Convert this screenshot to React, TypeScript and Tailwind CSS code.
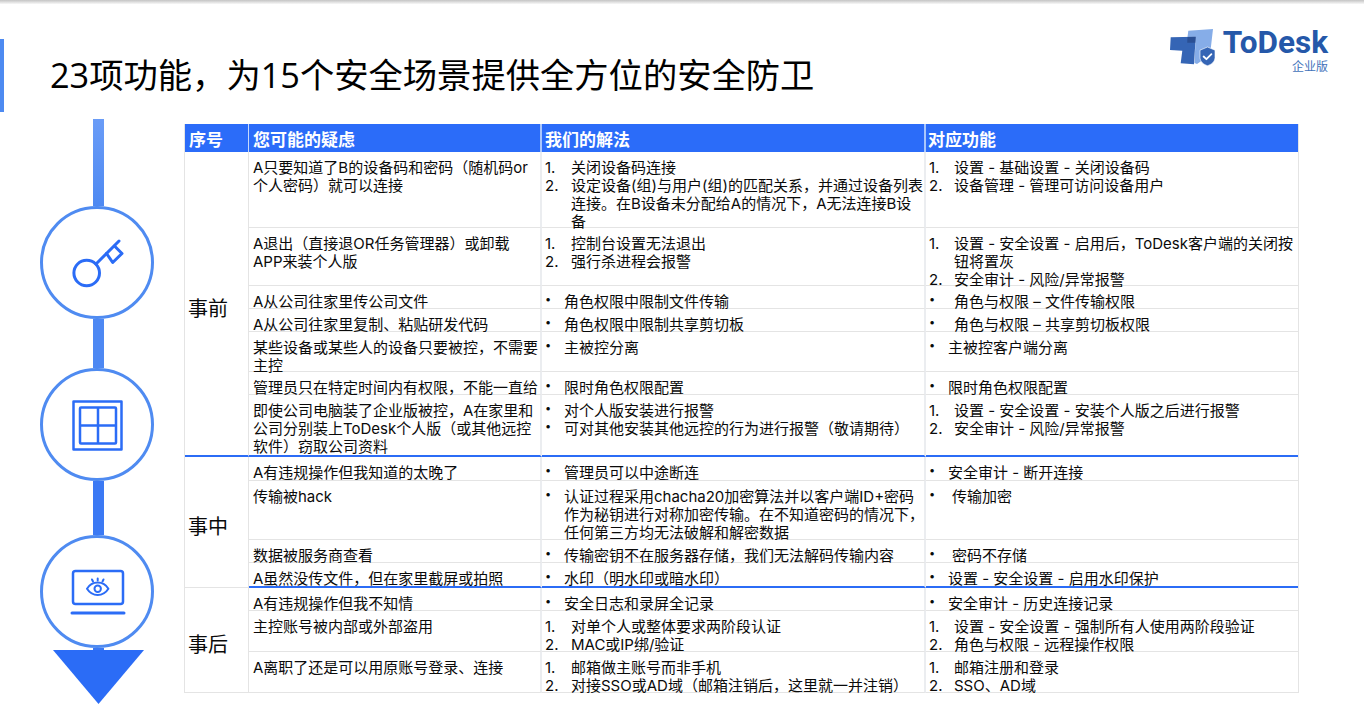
import React from "react";

type L = { ind: string; num?: boolean; items: string[] };
type Row = { q: string; a: L; f: L };

const A_N = "w-[26px]";
const A_B = "w-[19px]";
const F_N = "w-[25px]";
const F_B = "w-[19px]";
const F_B2 = "w-[23px]";
const F_B3 = "w-[25px]";

const groups: { name: string; span: string; border: string; rows: Row[] }[] = [
  {
    name: "事前",
    span: "row-span-7",
    border: "border-b-2 border-b-[#2b6cf6]",
    rows: [
      {
        q: "A只要知道了B的设备码和密码（随机码or\n个人密码）就可以连接",
        a: { ind: A_N, num: true, items: ["关闭设备码连接", "设定设备(组)与用户(组)的匹配关系，并通过设备列表\n连接。在B设备未分配给A的情况下，A无法连接B设\n备"] },
        f: { ind: F_N, num: true, items: ["设置 - 基础设置 - 关闭设备码", "设备管理 - 管理可访问设备用户"] },
      },
      {
        q: "A退出（直接退OR任务管理器）或卸载\nAPP来装个人版",
        a: { ind: A_N, num: true, items: ["控制台设置无法退出", "强行杀进程会报警"] },
        f: { ind: F_N, num: true, items: ["设置 - 安全设置 - 启用后，ToDesk客户端的关闭按\n钮将置灰", "安全审计 - 风险/异常报警"] },
      },
      {
        q: "A从公司往家里传公司文件",
        a: { ind: A_B, items: ["角色权限中限制文件传输"] },
        f: { ind: F_B3, items: ["角色与权限 – 文件传输权限"] },
      },
      {
        q: "A从公司往家里复制、粘贴研发代码",
        a: { ind: A_B, items: ["角色权限中限制共享剪切板"] },
        f: { ind: F_B3, items: ["角色与权限 – 共享剪切板权限"] },
      },
      {
        q: "某些设备或某些人的设备只要被控，不需要\n主控",
        a: { ind: A_B, items: ["主被控分离"] },
        f: { ind: F_B, items: ["主被控客户端分离"] },
      },
      {
        q: "管理员只在特定时间内有权限，不能一直给",
        a: { ind: A_B, items: ["限时角色权限配置"] },
        f: { ind: F_B, items: ["限时角色权限配置"] },
      },
      {
        q: "即使公司电脑装了企业版被控，A在家里和\n公司分别装上ToDesk个人版（或其他远控\n软件）窃取公司资料",
        a: { ind: A_B, items: ["对个人版安装进行报警", "可对其他安装其他远控的行为进行报警（敬请期待）"] },
        f: { ind: F_N, num: true, items: ["设置 - 安全设置 - 安装个人版之后进行报警", "安全审计 - 风险/异常报警"] },
      },
    ],
  },
  {
    name: "事中",
    span: "row-span-4",
    border: "border-b border-b-[#e4e4e4]",
    rows: [
      {
        q: "A有违规操作但我知道的太晚了",
        a: { ind: A_B, items: ["管理员可以中途断连"] },
        f: { ind: F_B, items: ["安全审计 - 断开连接"] },
      },
      {
        q: "传输被hack",
        a: { ind: A_B, items: ["认证过程采用chacha20加密算法并以客户端ID+密码\n作为秘钥进行对称加密传输。在不知道密码的情况下，\n任何第三方均无法破解和解密数据"] },
        f: { ind: F_B2, items: ["传输加密"] },
      },
      {
        q: "数据被服务商查看",
        a: { ind: A_B, items: ["传输密钥不在服务器存储，我们无法解码传输内容"] },
        f: { ind: F_B2, items: ["密码不存储"] },
      },
      {
        q: "A虽然没传文件，但在家里截屏或拍照",
        a: { ind: A_B, items: ["水印（明水印或暗水印）"] },
        f: { ind: F_B, items: ["设置 - 安全设置 - 启用水印保护"] },
      },
    ],
  },
  {
    name: "事后",
    span: "row-span-3",
    border: "border-b border-b-[#e4e4e4]",
    rows: [
      {
        q: "A有违规操作但我不知情",
        a: { ind: A_B, items: ["安全日志和录屏全记录"] },
        f: { ind: F_B, items: ["安全审计 - 历史连接记录"] },
      },
      {
        q: "主控账号被内部或外部盗用",
        a: { ind: A_N, num: true, items: ["对单个人或整体要求两阶段认证", "MAC或IP绑/验证"] },
        f: { ind: F_N, num: true, items: ["设置 - 安全设置 - 强制所有人使用两阶段验证", "角色与权限 - 远程操作权限"] },
      },
      {
        q: "A离职了还是可以用原账号登录、连接",
        a: { ind: A_N, num: true, items: ["邮箱做主账号而非手机", "对接SSO或AD域（邮箱注销后，这里就一并注销）"] },
        f: { ind: F_N, num: true, items: ["邮箱注册和登录", "SSO、AD域"] },
      },
    ],
  },
];

function List({ l }: { l: L }) {
  return (
    <div>
      {l.items.map((t, i) => (
        <div key={i} className="flex">
          {l.num ? (
            <span className={`${l.ind} shrink-0`}>{`${i + 1}.`}</span>
          ) : (
            <span className={`${l.ind} -mt-[3px] shrink-0 text-[11px]`}>•</span>
          )}
          <span className="whitespace-pre">{t}</span>
        </div>
      ))}
    </div>
  );
}

const BLUE = "#2b6cf6";

function Circle({ children }: { children: React.ReactNode }) {
  return (
    <div className="flex h-[113px] w-[114px] shrink-0 items-center justify-center rounded-full border-[3.5px] border-[#4f8bf1] bg-white">
      {children}
    </div>
  );
}

const headers = [
  { t: "序号", c: "pl-[4px] border-r border-r-[#c6d9fc]" },
  { t: "您可能的疑虑", c: "pl-[4px] border-r-2 border-r-[#a9c6fb]" },
  { t: "我们的解法", c: "pl-[3px] border-r-2 border-r-[#a9c6fb]" },
  { t: "对应功能", c: "pl-[2px]" },
];

export default function App() {
  return (
    <div
      lang="zh-CN"
      className="h-[708px] w-[1364px] overflow-hidden bg-white text-[#0a0a0a]"
      style={{ fontFamily: 'Inter,"Noto Sans CJK SC",sans-serif' }}
    >
      <div className="h-[4px] bg-gradient-to-b from-[#c4c4c4] to-[#f8f8f8]" />
      <header className="flex h-[115px] items-start">
        <div className="mt-[35px] h-[73px] w-[4px] shrink-0 bg-[#4d8af1]" />
        <h1
          className="ml-[46px] mt-[48px] whitespace-nowrap text-[34.3px] font-normal leading-[46px] text-black"
          style={{ fontFamily: '"Open Sans","Noto Sans CJK SC",sans-serif' }}
        >
          23项功能，为15个安全场景提供全方位的安全防卫
        </h1>
        <div className="ml-auto mr-[36px] mt-[24px] flex">
          <svg width="50" height="40" viewBox="1168 28 50 40" className="shrink-0">
            <polygon points="1188.3,30.7 1213,29 1210,55 1197,64 1194.5,63 1195.7,36.7 1187.5,36.9" fill="#86ade8" />
            <polygon points="1170.7,37.3 1195.7,36.7 1194,64.3 1180.7,63.3 1182.3,50.7 1170,50" fill="#3565b5" />
            <polygon points="1187.5,36.9 1195.7,36.7 1195.3,42.7 1187.2,42.7" fill="#2a4f94" />
            <path d="M1207.5 47 L1215 50.2 V57.5 C1215 61.5 1211.5 64.5 1207.5 65.7 C1203.5 64.5 1200 61.5 1200 57.5 V50.2 Z" fill="#3565b5" stroke="#fff" strokeWidth="0.6" />
            <path d="M1203.6 56.5 L1206.4 59.2 L1211.4 54.2" fill="none" stroke="#fff" strokeWidth="1.8" strokeLinecap="round" strokeLinejoin="round" />
          </svg>
          <div className="ml-[5px] flex flex-col items-end">
            <div
              className="text-[31.5px] font-bold leading-[30px] text-[#2558a9]"
              style={{ fontFamily: "Roboto,sans-serif" }}
            >
              ToDesk
            </div>
            <div className="mt-[2px] text-[12px] leading-[14px] text-[#4272ba]">企业版</div>
          </div>
        </div>
      </header>

      <main className="flex items-start">
        <div className="ml-[40px] flex w-[114px] shrink-0 flex-col items-center">
          <div className="ml-[3px] h-[87px] w-[11px] bg-gradient-to-b from-[#6a9cf7] to-[#4e89f2]" />
          <Circle>
            <svg width="60" height="60" viewBox="0 0 60 60" fill="none" stroke={BLUE} strokeWidth="3" strokeLinecap="round" strokeLinejoin="round">
              <circle cx="19.7" cy="40" r="12.8" />
              <path d="M29 31 L52 8" />
              <path d="M39.5 20.5 L45.7 29.5 L55 20.5 L47.5 13" />
            </svg>
          </Circle>
          <div className="ml-[3px] h-[49px] w-[11px] bg-[#4d88f3]" />
          <Circle>
            <svg width="60" height="60" viewBox="0 0 60 60" fill="none" stroke={BLUE} strokeWidth="2.5" strokeLinejoin="round">
              <rect x="6.5" y="6.5" width="48" height="48" />
              <rect x="13" y="12.5" width="36" height="36" rx="1" />
              <path d="M31 12.5 V48.5 M13 30.5 H49" />
            </svg>
          </Circle>
          <div className="ml-[3px] h-[54px] w-[11px] bg-[#3b79f4]" />
          <Circle>
            <svg width="60" height="60" viewBox="0 0 60 60" fill="none" stroke={BLUE} strokeWidth="2.5" strokeLinecap="round" strokeLinejoin="round">
              <rect x="6" y="9" width="50" height="33" rx="2.5" />
              <path d="M5 51 H57" strokeWidth="3" />
              <path d="M20 26.8 C23 21.5 27 20.5 30.7 20.5 C34.4 20.5 38.4 21.5 41.4 26.8 C38.4 31.5 34.4 33 30.7 33 C27 33 23 31.5 20 26.8 Z" strokeWidth="2" />
              <circle cx="30.7" cy="26.8" r="3.2" strokeWidth="2" />
              <path d="M30.7 16.5 V18.5 M25 17.5 L26 19.5 M36.5 17.5 L35.5 19.5" strokeWidth="2" />
            </svg>
          </Circle>
          <div className="ml-[3px] h-[2px] w-[11px] bg-[#3b79f4]" />
          <svg width="91" height="54" viewBox="0 0 91 54" className="ml-[3px] shrink-0">
            <polygon points="0,0 91,0 45.5,54" fill={BLUE} />
          </svg>
        </div>

        <div className="ml-[30px] mt-[5px] grid w-[1115px] grid-cols-[64px_293px_384px_372px] grid-rows-[28px_76px_58px_23px_23px_40px_23px_62px_24px_59px_23px_25px_23px_41px_41px] border-l border-r border-[#e4e4e4] text-[15px] leading-[18px]">
          {headers.map((h) => (
            <div
              key={h.t}
              className={`flex items-center bg-[#2b6cf9] pt-[4px] text-[17px] font-bold text-white ${h.c}`}
            >
              {h.t}
            </div>
          ))}
          {groups.map((g) =>
            g.rows.map((r, i) => {
              const last = i === g.rows.length - 1;
              const b = last && g.name !== "事后" ? "border-b-2 border-b-[#2b6cf6]" : "border-b border-b-[#e4e4e4]";
              return (
                <React.Fragment key={r.q}>
                  {i === 0 && (
                    <div className={`${g.span} ${g.border} flex items-center border-r border-r-[#e4e4e4] pl-[3px] pt-[10px] text-[20px] leading-[26px]`}>
                      {g.name}
                    </div>
                  )}
                  <div className={`${b} whitespace-pre border-r-2 border-r-[#ebedf0] pl-[4px] pt-[7px]`}>{r.q}</div>
                  <div className={`${b} border-r-2 border-r-[#ebedf0] pl-[3px] pt-[7px]`}>
                    <List l={r.a} />
                  </div>
                  <div className={`${b} pl-[3px] pt-[7px]`}>
                    <List l={r.f} />
                  </div>
                </React.Fragment>
              );
            })
          )}
        </div>
      </main>
    </div>
  );
}
